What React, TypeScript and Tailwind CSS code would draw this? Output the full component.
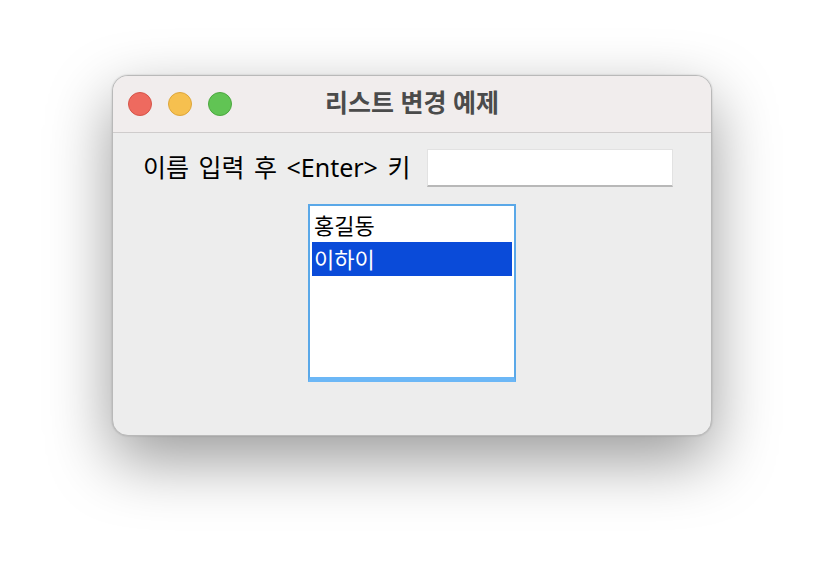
import type { ReactNode } from "react";

const font = { fontFamily: "'Noto Sans', 'Noto Sans CJK KR', sans-serif" };

function TrafficLight({ color, ring }: { color: string; ring: string }) {
  return <span className={`block w-6 h-6 rounded-full border ${color} ${ring}`} />;
}

function ListRow({ selected, children }: { selected?: boolean; children: ReactNode }) {
  return (
    <div
      className={`h-[34px] flex items-center pl-[2px] text-[22px] leading-none ${
        selected ? "bg-[#0a4bd9] text-white" : "text-black"
      }`}
    >
      {children}
    </div>
  );
}

export default function App() {
  return (
    <div className="w-[824px] h-[584px] bg-white pt-[75px] pl-[112px]" style={font}>
      <div className="w-[600px] h-[361px] rounded-[16px] bg-[#ededed] border border-[#b9b9b9] overflow-hidden flex flex-col shadow-[0_24px_64px_rgba(0,0,0,0.4),0_0_2px_rgba(0,0,0,0.2)]">
        <div className="h-[57px] shrink-0 bg-[#f1eded] border-b border-[#cfcccc] relative flex items-center justify-center">
          <div className="absolute left-[15px] top-[16px] flex gap-4">
            <TrafficLight color="bg-[#ee6a5f]" ring="border-[#d65449]" />
            <TrafficLight color="bg-[#f6c04f]" ring="border-[#dea63a]" />
            <TrafficLight color="bg-[#61c454]" ring="border-[#4ca83f]" />
          </div>
          <span className="text-[25px] font-bold text-[#4b4b4b] leading-none -mt-[3px]">리스트 변경 예제</span>
        </div>

        <div className="flex flex-col pt-4">
          <div className="flex items-center gap-[17px] ml-[30px]">
            <span className="text-[25px] text-black leading-none [word-spacing:3px] -mt-[2px]">
              이름 입력 후 &lt;Enter&gt; 키
            </span>
            <input
              className="w-[246px] h-[38px] bg-white border border-[#e2e2e2] border-b-[#b8b8b8] border-b-2 outline-none px-2 text-[20px]"
              style={font}
            />
          </div>

          <div className="mt-[17px] self-center w-[208px] h-[178px] bg-white border-2 border-[#5aa8e8] border-b-[5px] border-b-[#6cb7f6] p-[2px]">
            <ListRow>홍길동</ListRow>
            <ListRow selected>이하이</ListRow>
          </div>
        </div>
      </div>
    </div>
  );
}
